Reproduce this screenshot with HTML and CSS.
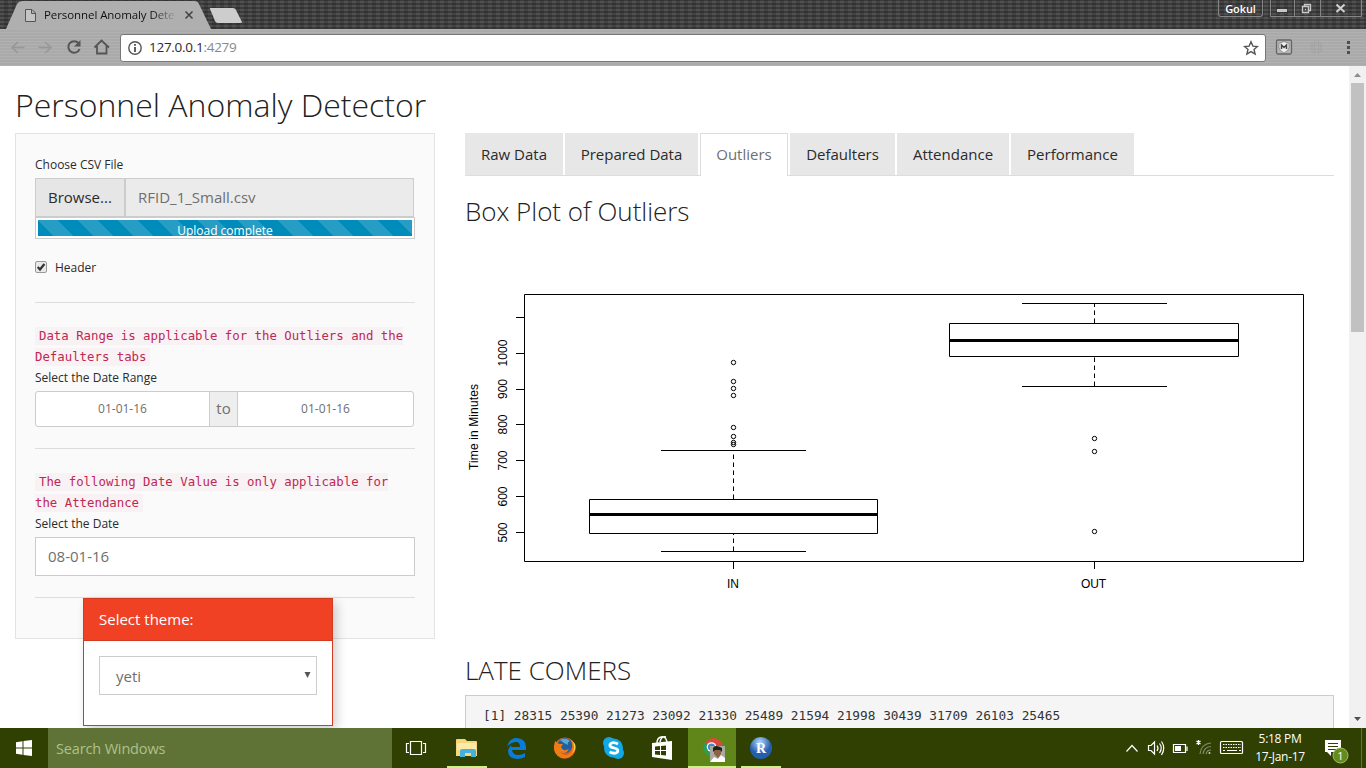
FILE: index.html
```html
<!DOCTYPE html>
<html lang="en">
<head>
<meta charset="utf-8">
<title>Personnel Anomaly Detector</title>
<link rel="stylesheet" href="styles.css">
</head>
<body>
<header class="chrome">
  <div class="tabstrip">
    <svg class="tab-shapes" width="250" height="29" viewBox="0 0 250 29">
      <path d="M6 29L17 4Q19 1 22 1H194Q198 1 199 4L211 29Z" fill="#afafaf"/>
      <path d="M210 8H233Q235 8 236 10L242 22Q242 23 240 23H218Q216 23 215 21L210 9Z" fill="#cdcdcd"/>
      <path d="M25.500 9.500H32L35.500 13V21.500H25.500ZM31.500 9.500V13.500H35.500" fill="#c4c4c4" stroke="#555"/>
      <path d="M185.500 11.500L192.500 18.500M192.500 11.500L185.500 18.500" stroke="#444" stroke-width="1.600"/>
    </svg>
    <span class="tab-title">Personnel Anomaly Dete</span>
    <div class="window-controls">
      <span class="user">Gokul</span>
      <svg width="93" height="18" viewBox="1269 0 93 18">
        <path d="M1270.500 0V16.500H1361.500V0M1294.500 0V16M1320.500 0V16" fill="none" stroke="#858585"/>
        <path d="M1277 9H1287V12H1277Z" fill="#c8c8c8"/>
        <path d="M1304.500 6V4.500H1310.500V10.500H1309M1302.500 6.500H1308.500V12.500H1302.500ZM1305 9.500H1306" fill="none" stroke="#c8c8c8" stroke-width="1.400"/>
        <path d="M1336.500 4.500L1344.500 12M1344.500 4.500L1336.500 12" stroke="#d0d0d0" stroke-width="2"/>
      </svg>
    </div>
  </div>
  <div class="toolbar">
    <svg width="110" height="37" viewBox="5 29 110 37" fill="none">
      <path d="M24.500 47.500H12M18 42L12 47.500L18 53M38.500 47.500H51M45 42L51 47.500L45 53" stroke="#979797" stroke-width="1.500"/>
      <path d="M78.600 43.200A5.800 5.800 0 1 0 79.600 49" stroke="#555" stroke-width="2"/>
      <path d="M80.500 40V46.500H74Z" fill="#555"/>
      <path d="M94.500 47.500L101.500 40.500L109 47.500M97 46V53.500H106.500V46" stroke="#555" stroke-width="1.800"/>
    </svg>
    <div class="address">
      <svg width="16" height="16" viewBox="0 0 16 16"><circle cx="8" cy="8" r="6.200" fill="none" stroke="#555" stroke-width="1.400"/><path d="M8 7V12M8 4V5.700" stroke="#444" stroke-width="1.700"/></svg>
      <span class="url">127.0.0.1<span class="port">:4279</span></span>
      <svg class="star" width="16" height="16" viewBox="0 0 16 16"><path d="M8 1.800L9.900 6.100L14.400 6.500L11 9.500L12.100 14L8 11.600L3.900 14L5 9.500L1.600 6.500L6.100 6.100Z" fill="none" stroke="#555" stroke-width="1.400"/></svg>
    </div>
    <svg width="100" height="37" viewBox="1266 29 100 37">
      <rect x="1276.500" y="40" width="15" height="14" rx="1.500" fill="#b4b4b4" stroke="#666" stroke-width="1.300"/>
      <path d="M1279 43Q1281 43 1284 41.500Q1287 43 1289 43V48Q1288 51 1284 53Q1280 51 1279 48Z" fill="#eee" stroke="#777" stroke-width=".7"/>
      <path d="M1281.500 49V45L1284 47.500L1286.500 45V49" fill="none" stroke="#444" stroke-width="1.500"/>
      <path d="M1312 43H1321V52H1312ZM1309 45.500H1323M1309 49.500H1323M1314.500 40V54M1318.500 40V54" fill="none" stroke="#a4a4a4" stroke-width="1.200"/>
      <path d="M1347 41H1350V44H1347ZM1347 46H1350V49H1347ZM1347 51H1350V54H1347Z" fill="#4f4f4f"/>
    </svg>
  </div>
</header>
<div class="viewport">
  <main class="page">
    <h1>Personnel Anomaly Detector</h1>
    <div class="columns">
      <aside class="well">
        <label class="label">Choose CSV File</label>
        <div class="file"><span class="browse">Browse...</span><span class="filename">RFID_1_Small.csv</span></div>
        <div class="progress"><div class="bar">Upload complete</div></div>
        <div class="check"><svg width="12" height="12" viewBox="0 0 12 12"><rect x=".5" y=".5" width="11" height="11" rx="1.500" fill="#e9e9e9" stroke="#999"/><path d="M2.700 6L5 8.500L9.400 3" fill="none" stroke="#333" stroke-width="2.200"/></svg>Header</div>
        <hr class="rule">
        <div class="note"><code>Data Range is applicable for the Outliers and the<br>Defaulters tabs</code></div>
        <label class="label">Select the Date Range</label>
        <div class="range"><span class="date">01-01-16</span><span class="to">to</span><span class="date last">01-01-16</span></div>
        <hr class="rule">
        <div class="note"><code>The following Date Value is only applicable for<br>the Attendance</code></div>
        <label class="label">Select the Date</label>
        <div class="single-date">08-01-16</div>
        <hr class="rule end">
      </aside>
      <section class="content">
        <nav class="tabs">
          <a class="tab raw">Raw Data</a><a class="tab prepared">Prepared Data</a><a class="tab active">Outliers</a><a class="tab defaulters">Defaulters</a><a class="tab attendance">Attendance</a><a class="tab performance">Performance</a>
        </nav>
        <h2 class="plot-title">Box Plot of Outliers</h2>
        <svg class="plot" width="869" height="400" viewBox="465 237 869 400">
          <g class="lines">
            <path d="M524.500 294.500H1303.500V561.500H524.500Z"/>
            <path d="M516 317.500H524M516 353.500H524M516 389.500H524M516 424.500H524M516 460.500H524M516 496.500H524M516 532.500H524M733.500 562V569M1094.500 562V569"/>
            <path d="M589.500 499.500H877.500V533.500H589.500ZM661 450.500H806M661 551.500H806"/>
            <path d="M949.500 323.500H1238.500V356.500H949.500ZM1022 303.500H1167M1022 386.500H1167"/>
            <path class="dash" d="M733.500 499V451M733.500 551V534M1094.500 323V304M1094.500 386V357"/>
            <path class="median" d="M590 514.500H878M950 340.500H1239"/>
            <circle cx="733.500" cy="362.500" r="2.200"/><circle cx="733.500" cy="381.500" r="2.200"/><circle cx="733.500" cy="388.500" r="2.200"/><circle cx="733.500" cy="395.500" r="2.200"/><circle cx="733.500" cy="427.500" r="2.200"/><circle cx="733.500" cy="436.500" r="2.200"/><circle cx="733.500" cy="442.500" r="2.200"/><circle cx="733.500" cy="444.500" r="2.200"/>
            <circle cx="1094.500" cy="438.500" r="2.200"/><circle cx="1094.500" cy="451.500" r="2.200"/><circle cx="1094.500" cy="531.500" r="2.200"/>
          </g>
          <g class="axis">
            <text transform="translate(507 353) rotate(-90)" textLength="27">1000</text>
            <text transform="translate(507 389) rotate(-90)">900</text>
            <text transform="translate(507 424.500) rotate(-90)">800</text>
            <text transform="translate(507 460.500) rotate(-90)">700</text>
            <text transform="translate(507 496.500) rotate(-90)">600</text>
            <text transform="translate(507 532.500) rotate(-90)">500</text>
            <text transform="translate(478 427) rotate(-90)" textLength="86">Time in Minutes</text>
            <text x="733" y="588">IN</text>
            <text x="1093.500" y="588" textLength="25">OUT</text>
          </g>
        </svg>
        <h2 class="late-title">LATE COMERS</h2>
        <pre class="output">[1] 28315 25390 21273 23092 21330 25489 21594 21998 30439 31709 26103 25465</pre>
      </section>
    </div>
    <div class="theme">
      <div class="theme-head">Select theme:</div>
      <div class="theme-body"><div class="select"><span>yeti</span><svg width="7" height="6" viewBox="0 0 7 6"><path d="M0.500 0H6.500L3.500 6Z" fill="#555"/></svg></div></div>
    </div>
  </main>
  <div class="scrollbar">
    <svg width="17" height="17" viewBox="0 0 17 17"><path d="M5 11L8.500 7L12 11Z" fill="#8d8d8d"/></svg>
    <div class="thumb"></div>
    <svg class="down" width="17" height="17" viewBox="0 0 17 17"><path d="M5 6L8.500 10L12 6Z" fill="#505050"/></svg>
  </div>
</div>
<footer class="taskbar">
  <div class="start"><svg width="16" height="16" viewBox="0 0 16 16"><path d="M0 2.300L6.500 1.300V7.500H0ZM7.500 1.100L16 0V7.500H7.500ZM0 8.500H6.500V14.700L0 13.700ZM7.500 8.500H16V16L7.500 14.900Z" fill="#fff"/></svg></div>
  <div class="search">Search Windows</div>
  <svg class="apps" width="398" height="40" viewBox="392 728 398 40">
    <defs>
      <radialGradient id="fox" cx=".5" cy=".35"><stop offset="0" stop-color="#fb3"/><stop offset="1" stop-color="#d9480f"/></radialGradient>
      <radialGradient id="ball" cx=".45" cy=".25"><stop offset="0" stop-color="#b5d9ff"/><stop offset="1" stop-color="#245fae"/></radialGradient>
    </defs>
    <rect x="688" y="728" width="48" height="40" fill="#608619"/>
    <path d="M447 766H487V768H447ZM688 766H736V768H688ZM741 766H781V768H741Z" fill="#cdf184"/>
    <path d="M410.500 741.500H421.500V754.500H410.500ZM409 743.500H406.500V752.500H409M423 743.500H425.500V752.500H423" fill="none" stroke="#fff" stroke-width="1.200"/>
    <path d="M456 740Q456 739 457 739H465L467 741H476Q477 741 477 742V756H456Z" fill="#f5d67f"/>
    <path d="M457 743H476V750H457Z" fill="#ffe9a7"/>
    <path d="M460 757V751Q460 749 462 749H474Q476 749 476 751V757H471V753H465V757Z" fill="#46b1dc"/>
    <path d="M507 747Q509 738 517 738Q526 739 526 747V750H512Q513 755 518 755Q522 755 525 753V757Q521 759 517 759Q508 758 508 751Q509 746 513 744Q511 745 511 747H520Q520 742 516 742Q511 742 507 747Z" fill="#0b7bd8"/>
    <circle cx="565" cy="748" r="10.500" fill="url(#fox)"/>
    <circle cx="565" cy="745.500" r="7.500" fill="#235f9f"/>
    <path d="M560 740Q566 737 570 741Q567 742 568 745L564 743Z" fill="#57a9d6"/>
    <path d="M555 741L559 744L563 744L561 747Q563 752 569 749Q566 755 560 752Q566 758 571 752Q574 748 571 740Q578 746 574 753Q569 760 561 758Q553 754 554 746Z" fill="#ef7d15"/>
    <path d="M571 740Q577 746 572 753Q577 749 575 744Z" fill="#ffd34c"/>
    <circle cx="613.500" cy="748" r="9.500" fill="#11a8e8"/><circle cx="609" cy="743" r="6" fill="#11a8e8"/><circle cx="618" cy="753" r="6" fill="#11a8e8"/>
    <path d="M618 744Q612 741 610 744.500Q609 747 614 748Q619 749 617.500 752Q615 754.500 609.500 752" fill="none" stroke="#fff" stroke-width="2.800"/>
    <path d="M652 743L672 741V760L652 757Z" fill="#fff"/><path d="M657 743Q657 738 661 737Q666 736 667 742M660 742Q661 736 666 737" fill="none" stroke="#fff" stroke-width="1.500"/>
    <path d="M655 746.500L660 746V750H655ZM661 746L666 745.500V750H661ZM655 751H660V755L655 754.500ZM661 751H666V755.500L661 755Z" fill="#304003"/>
    <circle cx="713.500" cy="747.500" r="9.500" fill="#d9493c"/><path d="M713 747L705 742Q701 750 707 755L713 757Z" fill="#2c9f54"/><path d="M713 747H723Q723 756 713 757Z" fill="#f4c636"/><circle cx="711.500" cy="747" r="4.800" fill="#fff"/><circle cx="711.500" cy="747" r="3.600" fill="#4285d8"/>
    <path d="M710 746H725V762H710Z" fill="#a6aaa0"/><path d="M710 762L714 757L718 759L721 755L725 758V762Z" fill="#fff"/><path d="M714 750Q716 746 721 748V754L718 758L714 754Z" fill="#8d6047"/><path d="M713 752V748Q715 744 722 748V752L720 750L715 750Z" fill="#201e18"/>
    <circle cx="761" cy="748" r="11" fill="url(#ball)"/><text class="r-mark" x="761" y="752.500">R</text>
  </svg>
  <div class="tray">
    <svg width="130" height="40" viewBox="1119 728 130 40" fill="none" stroke="#fff" stroke-width="1.200">
      <path d="M1126.500 751.500L1132 745.500L1137.500 751.500"/>
      <path d="M1148.500 745.500H1151L1154.500 742V754L1151 750.500H1148.500ZM1157 745.500Q1159 748 1157 751M1159.500 743.500Q1163 748 1159.500 753M1161.500 741.500Q1166 748 1161.500 755"/>
      <path d="M1173.500 744.500H1185.500V752.500H1173.500ZM1187 746.500V751"/><path d="M1175 746H1181V751H1175Z" fill="#fff" stroke="none"/>
      <path d="M1198.500 740V745M1196.500 741L1200.500 744M1200.500 741L1196.500 744"/>
      <path d="M1200 754Q1201 744 1211 743M1203 754Q1204 747 1211 746.500M1206 754Q1207 750 1211 750" stroke="#80906a"/><circle cx="1209.500" cy="753" r="1" fill="#ccc" stroke="none"/>
      <rect x="1220.500" y="741.500" width="22" height="12" rx="1"/><path d="M1223 744.500H1241M1223 747.500H1241" stroke-dasharray="1.500 1"/><path d="M1223 750.500H1225M1227 750.500H1237M1239 750.500H1241"/>
    </svg>
    <div class="clock"><span>5:18 PM</span><span>17-Jan-17</span></div>
    <svg width="52" height="40" viewBox="1314 728 52 40">
      <path d="M1325 740H1341V752H1331V756L1327 752H1325Z" fill="#fff"/><path d="M1328 743.500H1338M1328 746.500H1338M1328 749.500H1336" stroke="#304003"/>
      <circle cx="1340.500" cy="755.500" r="7.500" fill="#648b1b" stroke="#a0bd6a"/><text class="badge" x="1340.500" y="759.500">1</text>
      <path d="M1361.500 728V768" stroke="#66733d"/>
    </svg>
  </div>
</footer>
</body>
</html>
```

FILE: styles.css
```css
* { box-sizing: border-box; }
body { margin: 0; width: 1366px; height: 768px; overflow: hidden; display: flex; flex-direction: column; background: #fff; color: #2b2b2b; font: 15px/21px "Open Sans", sans-serif; }
svg { display: block; flex: none; }
.chrome { flex: 0 0 66px; }
.tabstrip { height: 29px; position: relative; display: flex; justify-content: flex-end; background-color: #444; background-image: repeating-linear-gradient(90deg, transparent 0 4px, rgba(0,0,0,.16) 4px 8px), repeating-linear-gradient(0deg, #3b3b3b 0 2px, #505050 2px 4px); }
.tab-shapes { position: absolute; left: 0; top: 0; }
.tab-title { position: absolute; left: 44px; top: 5px; width: 132px; overflow: hidden; white-space: nowrap; font-size: 11.5px; line-height: 20px; letter-spacing: -.08px; background: linear-gradient(90deg, #111 108px, #999 130px); -webkit-background-clip: text; background-clip: text; color: transparent; }
.window-controls { display: flex; gap: 6px; padding-right: 4px; }
.user { width: 45px; height: 17px; border: 1px solid #858585; border-top: 0; border-radius: 0 0 3px 3px; color: #fff; text-align: center; font: 600 11px/18px "Open Sans", sans-serif; letter-spacing: -.1px; }
.toolbar { height: 37px; display: flex; align-items: center; padding-left: 5px; background: repeating-linear-gradient(#b1b1b1 0 1px, #aaa 1px 3px); }
.toolbar > svg:first-child { margin-right: 5px; }
.address { width: 1146px; height: 28px; display: flex; align-items: center; padding: 0 6px; background: #fff; border: 1px solid #777; border-radius: 3px; }
.url { margin-left: 6px; font-size: 13.5px; letter-spacing: -.28px; }
.port { color: #888; }
.star { margin-left: auto; }
.viewport { flex: 1; display: flex; min-height: 0; }
.page { position: relative; width: 1349px; padding: 16px 15px 0; overflow: hidden; }
h1, h2 { font-weight: 300; color: #222; margin: 0; white-space: nowrap; }
h1 { font-size: 32px; line-height: 45px; margin-bottom: 6px; }
.columns { display: flex; gap: 30px; }
.well { width: 420px; height: 506px; padding: 20px 19px; background: #fafafa; border: 1px solid #e3e3e3; }
.label { display: block; font-size: 12px; line-height: 18px; margin: 2px 0 4px; white-space: nowrap; }
.file { display: flex; height: 39px; width: 379px; border: 1px solid #ccc; background: #ebebeb; line-height: 37px; }
.browse { width: 90px; padding-left: 12px; border-right: 2px solid #ccc; background: #e6e6e6; }
.filename { padding-left: 12px; color: #6f6f6f; }
.progress { height: 22px; padding: 2px; border: 1px solid #ccc; background: #fff; }
.bar { height: 16px; overflow: hidden; padding-top: 2px; text-align: center; color: #fff; font-size: 12px; line-height: 18px; background: #008cba linear-gradient(45deg, rgba(255,255,255,.15) 25%, transparent 25%, transparent 50%, rgba(255,255,255,.15) 50%, rgba(255,255,255,.15) 75%, transparent 75%) 0 0 / 40px 40px; }
.check { display: flex; align-items: center; gap: 8px; height: 18px; margin: 19px 0 26px; font-size: 12px; }
.rule { border: 0; border-top: 1px solid #ddd; margin: 0 0 21px; }
.note { height: 43px; padding-top: 2px; font: 12.35px/21px "DejaVu Sans Mono", monospace; }
code { font: inherit; color: #bf2853; background: #f9f2f4; padding: 2px 4px; white-space: nowrap; }
.note + .label { margin: 0 0 4px; padding-top: 2px; line-height: 18px; }
.range { display: flex; width: 379px; height: 36px; border: 1px solid #ccc; border-radius: 3px; background: #fff; line-height: 34px; color: #6f6f6f; margin-top: 3px; }
.date { width: 173px; font-size: 12px; text-align: center; }
.date.last { flex: 1; }
.to { width: 29px; line-height: 33px; text-align: center; background: #eee; border: 1px solid #ccc; border-width: 0 1px; }
.range + .rule { margin: 21px 0; }
.single-date { height: 39px; border: 1px solid #ccc; background: #fff; line-height: 37px; padding-left: 12px; color: #6f6f6f; }
.rule.end { margin: 21px 0 0; }
.content { width: 869px; }
.tabs { display: flex; gap: 2px; height: 43px; border-bottom: 1px solid #ddd; }
.tab { height: 42px; background: #e7e7e7; line-height: 43px; text-align: center; white-space: nowrap; }
.raw { width: 98px; } .prepared { width: 133px; } .defaulters { width: 105px; } .attendance { width: 112px; } .performance { width: 123px; }
.tab.active { width: 88px; height: 43px; background: #fff; border: 1px solid #ddd; border-bottom: 0; color: #6f6f6f; line-height: 41px; }
.plot-title { font-size: 26px; line-height: 36px; margin: 17px 0 8px; letter-spacing: -.03px; }
.lines { fill: none; stroke: #000; stroke-width: 1; }
.dash { stroke-dasharray: 4.500 3.500; }
.median { stroke-width: 3; }
.axis { font: 12px "Liberation Sans", sans-serif; text-anchor: middle; fill: #000; }
.late-title { font-size: 26px; line-height: 36px; margin: 15px 0 7px; }
.output { height: 60px; margin: 0; padding: 10px 17px; border: 1px solid #ccc; background: #f5f5f5; color: #333; font: 12.79px/20px "DejaVu Sans Mono", monospace; white-space: pre; }
.theme { position: absolute; left: 83px; top: 532px; width: 250px; height: 128px; border: 1px solid #d43a20; background: #fff; box-shadow: 4px 4px 10px rgba(0,0,0,.18); }
.theme-head { height: 42px; padding-left: 15px; line-height: 41px; color: #fff; background: #f04124; border-bottom: 1px solid #d43a20; }
.theme-body { padding: 15px; }
.select { height: 39px; border: 1px solid #ccc; display: flex; align-items: center; justify-content: space-between; padding: 2px 5px 0 16px; color: #6f6f6f; }
.select svg { margin-top: -4px; }
.scrollbar { width: 17px; background: #f1f1f1; display: flex; flex-direction: column; }
.thumb { width: 13px; height: 249px; margin-left: 2px; background: #c1c1c1; }
.down { margin-top: auto; }
.taskbar { flex: 0 0 40px; height: 40px; display: flex; background: #304003; color: #fff; }
.start { width: 48px; display: flex; align-items: center; justify-content: center; }
.search { width: 344px; padding: 1px 0 0 8px; line-height: 39px; font-size: 14.5px; letter-spacing: -.15px; color: #afc08c; background: #5f7336; }
.r-mark { font: bold 14px "Liberation Serif", serif; fill: #fff; text-anchor: middle; }
.tray { margin-left: auto; display: flex; }
.clock { width: 65px; display: flex; flex-direction: column; align-items: center; padding: 2px 3px 0 0; font-size: 12px; line-height: 18px; letter-spacing: -.3px; white-space: nowrap; }
.badge { font: 11px "Open Sans", sans-serif; fill: #fff; text-anchor: middle; }
```
